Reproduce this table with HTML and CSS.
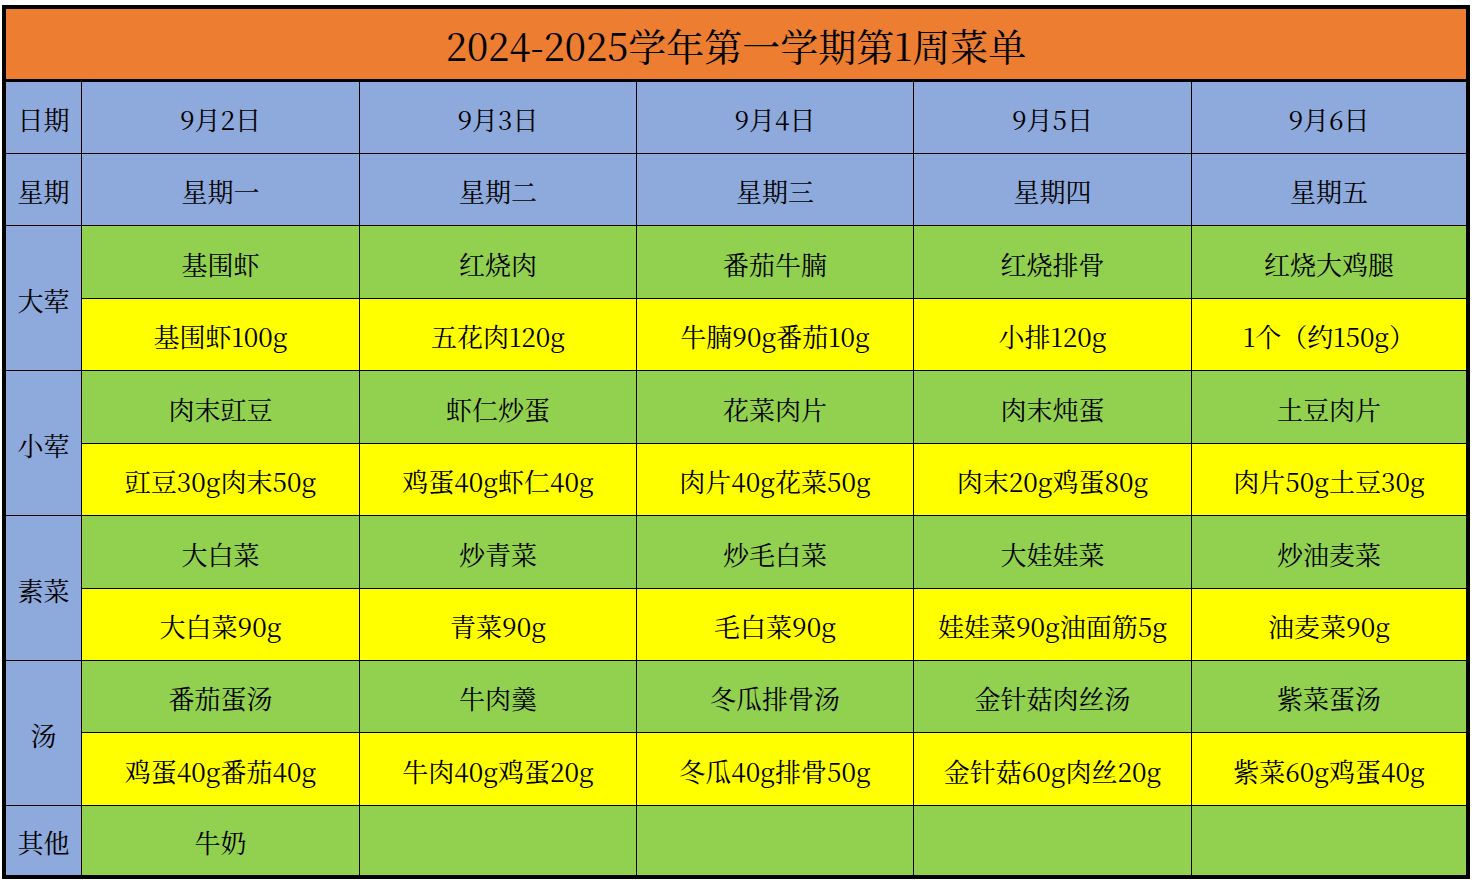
FILE: index.html
```html
<!DOCTYPE html>
<html lang="zh-CN">
<head>
<meta charset="utf-8">
<title>2024-2025学年第一学期第1周菜单</title>
<link rel="stylesheet" href="styles.css">
</head>
<body>
<div class="sheet">
  <div class="title">2024-2025学年第一学期第1周菜单</div>
  <div class="grid">
    <div class="cell blue">日期</div>
    <div class="cell blue">9月2日</div>
    <div class="cell blue">9月3日</div>
    <div class="cell blue">9月4日</div>
    <div class="cell blue">9月5日</div>
    <div class="cell blue">9月6日</div>

    <div class="cell blue">星期</div>
    <div class="cell blue">星期一</div>
    <div class="cell blue">星期二</div>
    <div class="cell blue">星期三</div>
    <div class="cell blue">星期四</div>
    <div class="cell blue">星期五</div>

    <div class="cell blue span2">大荤</div>
    <div class="cell green">基围虾</div>
    <div class="cell green">红烧肉</div>
    <div class="cell green">番茄牛腩</div>
    <div class="cell green">红烧排骨</div>
    <div class="cell green">红烧大鸡腿</div>
    <div class="cell yellow">基围虾100g</div>
    <div class="cell yellow">五花肉120g</div>
    <div class="cell yellow">牛腩90g番茄10g</div>
    <div class="cell yellow">小排120g</div>
    <div class="cell yellow">1个（约150g）</div>

    <div class="cell blue span2">小荤</div>
    <div class="cell green">肉末豇豆</div>
    <div class="cell green">虾仁炒蛋</div>
    <div class="cell green">花菜肉片</div>
    <div class="cell green">肉末炖蛋</div>
    <div class="cell green">土豆肉片</div>
    <div class="cell yellow">豇豆30g肉末50g</div>
    <div class="cell yellow">鸡蛋40g虾仁40g</div>
    <div class="cell yellow">肉片40g花菜50g</div>
    <div class="cell yellow">肉末20g鸡蛋80g</div>
    <div class="cell yellow">肉片50g土豆30g</div>

    <div class="cell blue span2">素菜</div>
    <div class="cell green">大白菜</div>
    <div class="cell green">炒青菜</div>
    <div class="cell green">炒毛白菜</div>
    <div class="cell green">大娃娃菜</div>
    <div class="cell green">炒油麦菜</div>
    <div class="cell yellow">大白菜90g</div>
    <div class="cell yellow">青菜90g</div>
    <div class="cell yellow">毛白菜90g</div>
    <div class="cell yellow">娃娃菜90g油面筋5g</div>
    <div class="cell yellow">油麦菜90g</div>

    <div class="cell blue span2">汤</div>
    <div class="cell green">番茄蛋汤</div>
    <div class="cell green">牛肉羹</div>
    <div class="cell green">冬瓜排骨汤</div>
    <div class="cell green">金针菇肉丝汤</div>
    <div class="cell green">紫菜蛋汤</div>
    <div class="cell yellow">鸡蛋40g番茄40g</div>
    <div class="cell yellow">牛肉40g鸡蛋20g</div>
    <div class="cell yellow">冬瓜40g排骨50g</div>
    <div class="cell yellow">金针菇60g肉丝20g</div>
    <div class="cell yellow">紫菜60g鸡蛋40g</div>

    <div class="cell blue">其他</div>
    <div class="cell green">牛奶</div>
    <div class="cell green"></div>
    <div class="cell green"></div>
    <div class="cell green"></div>
    <div class="cell green"></div>
  </div>
</div>
</body>
</html>
```
FILE: styles.css
```css
html, body {
  margin: 0;
  padding: 0;
  background: #ffffff;
}
body {
  padding: 5px 0 0 2px;
  font-family: "Noto Serif CJK SC", "Liberation Serif", "Noto Sans CJK SC", serif;
  color: #000;
}
.sheet {
  width: 1460px;
  border: 4px solid #000;
  background: #000;
}
.title {
  height: 73px;
  background: #ED7D31;
  border-bottom: 3px solid #000;
  display: flex;
  align-items: center;
  justify-content: center;
  font-size: 38px;
  box-sizing: border-box;
  color: #000;
}
.grid {
  display: grid;
  grid-template-columns: 75px 277px 276px 276px 277px 274px;
  grid-template-rows: 71px 71px 72px 71px 72px 71px 72px 71px 71px 72px 69px;
  gap: 1px;
  background: #000;
}
.cell {
  display: flex;
  align-items: center;
  justify-content: center;
  font-size: 26px;
  padding-top: 2px;
  box-sizing: border-box;
  white-space: nowrap;
}
.span2 {
  grid-row: span 2;
}
.blue { background: #8EA9DB; }
.green { background: #92D050; }
.yellow { background: #FFFF00; }
```
